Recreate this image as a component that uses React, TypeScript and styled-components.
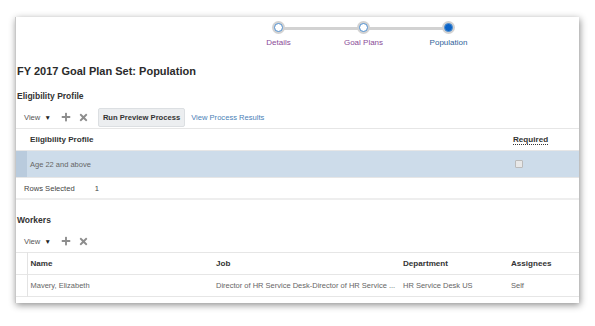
import styled, { createGlobalStyle } from 'styled-components';
import { FaPlus, FaTimes } from 'react-icons/fa';

const GlobalStyle = createGlobalStyle`
  html, body {
    margin: 0;
    padding: 0;
    background: #ffffff;
    font-family: 'Liberation Sans', Arial, sans-serif;
  }
`;

interface StepINTERFACE {
  label: string;
  current?: boolean;
}

const steps: StepINTERFACE[] = [{ label: 'Details' }, { label: 'Goal Plans' }, { label: 'Population', current: true }];

const workers = [
  {
    name: 'Mavery, Elizabeth',
    job: 'Director of HR Service Desk-Director of HR Service ...',
    department: 'HR Service Desk US',
    assignees: 'Self',
  },
];

function Toolbar({ children }: { children?: React.ReactNode }) {
  return (
    <S.ToolbarRow>
      <S.ViewMenu>
        View <S.Caret>▼</S.Caret>
      </S.ViewMenu>
      <S.IconBtn>
        <FaPlus size={10} />
      </S.IconBtn>
      <S.IconBtn>
        <FaTimes size={11} />
      </S.IconBtn>
      {children}
    </S.ToolbarRow>
  );
}

function App() {
  return (
    <>
      <GlobalStyle />
      <S.Page>
        <S.Card>
          <S.Train>
            {steps.map((step, i) => (
              <S.Step key={step.label} first={i === 0}>
                <S.Dot current={!!step.current} />
                <S.StepLabel current={!!step.current}>{step.label}</S.StepLabel>
              </S.Step>
            ))}
          </S.Train>

          <S.PageTitle>FY 2017 Goal Plan Set: Population</S.PageTitle>

          <S.SectionTitle>Eligibility Profile</S.SectionTitle>
          <Toolbar>
            <S.Button>Run Preview Process</S.Button>
            <S.Link>View Process Results</S.Link>
          </Toolbar>
          <S.Table>
            <colgroup>
              <S.Col w={11} />
              <S.Col />
              <S.Col w={69} />
            </colgroup>
            <thead>
              <tr>
                <S.Lead />
                <S.Th>Eligibility Profile</S.Th>
                <S.Th>
                  <S.Dotted>Required</S.Dotted>
                </S.Th>
              </tr>
            </thead>
            <tbody>
              <S.Row selected>
                <S.Lead selected />
                <S.Td>Age 22 and above</S.Td>
                <S.Td>
                  <S.Check />
                </S.Td>
              </S.Row>
            </tbody>
          </S.Table>
          <S.Footer>
            <span>Rows Selected</span>
            <span>1</span>
          </S.Footer>

          <S.SectionTitle spaced>Workers</S.SectionTitle>
          <Toolbar />
          <S.Table>
            <colgroup>
              <S.Col w={11} />
              <S.Col w={186} />
              <S.Col w={187} />
              <S.Col w={108} />
              <S.Col />
            </colgroup>
            <thead>
              <tr>
                <S.Lead bordered />
                <S.Th>Name</S.Th>
                <S.Th>Job</S.Th>
                <S.Th>Department</S.Th>
                <S.Th>Assignees</S.Th>
              </tr>
            </thead>
            <tbody>
              {workers.map((w) => (
                <S.Row key={w.name}>
                  <S.Lead bordered />
                  <S.Td>{w.name}</S.Td>
                  <S.Td>{w.job}</S.Td>
                  <S.Td>{w.department}</S.Td>
                  <S.Td>{w.assignees}</S.Td>
                </S.Row>
              ))}
            </tbody>
          </S.Table>
        </S.Card>
      </S.Page>
    </>
  );
}
export default App;

const Page = styled.div`
  width: 595px;
  height: 326px;
  padding: 17px 16px 0 15px;
  box-sizing: border-box;
  overflow: hidden;
`;

const Card = styled.div`
  width: 564px;
  height: 286px;
  background: #fff;
  border-left: 1px solid #c8c8c8;
  box-shadow: 1px 2px 7px rgba(0, 0, 0, 0.45);
  box-sizing: border-box;
  overflow: hidden;
`;

const Train = styled.div`
  display: flex;
  height: 46px;
  padding-left: 220px;
  padding-top: 5px;
  box-sizing: border-box;
`;

const Step = styled.div<{ first: boolean }>`
  position: relative;
  width: 85px;
  display: flex;
  flex-direction: column;
  align-items: center;

  &::before {
    content: '';
    display: ${({ first }) => (first ? 'none' : 'block')};
    position: absolute;
    top: 5px;
    left: -42px;
    width: 85px;
    height: 3px;
    background: #d2d2d2;
  }
`;

const Dot = styled.div<{ current: boolean }>`
  position: relative;
  z-index: 1;
  width: 7px;
  height: 7px;
  margin-top: 1px;
  border-radius: 50%;
  border: 1.5px solid #4f8fd0;
  background: ${({ current }) => (current ? '#0b64c8' : '#fff')};
  box-shadow: 0 0 0 2px #d2d2d2;
`;

const StepLabel = styled.div<{ current: boolean }>`
  margin-top: 6px;
  font-size: 8px;
  color: ${({ current }) => (current ? '#2f5f9a' : '#8b4c97')};
`;

const PageTitle = styled.div`
  font-size: 11px;
  font-weight: bold;
  color: #2b2b2b;
  line-height: 16px;
  padding-left: 1px;
`;

const SectionTitle = styled.div<{ spaced?: boolean }>`
  font-size: 8.5px;
  font-weight: bold;
  color: #333;
  line-height: 14px;
  padding-left: 1px;
  margin-top: ${({ spaced }) => (spaced ? '13px' : '10px')};
`;

const ToolbarRow = styled.div`
  display: flex;
  align-items: center;
  height: 22px;
  padding-left: 8px;
  margin-top: 3px;
  font-size: 7.6px;
`;

const ViewMenu = styled.span`
  color: #555;
  margin-right: 10px;
`;

const Caret = styled.span`
  font-size: 6.5px;
  color: #222;
  margin-left: 2px;
`;

const IconBtn = styled.span`
  display: inline-flex;
  color: #8d8d8d;
  margin-right: 7px;
`;

const Button = styled.span`
  margin-left: 2px;
  height: 19px;
  line-height: 17px;
  padding: 0 4px;
  background: #eceef0;
  border: 1px solid #dcdfe2;
  border-radius: 2px;
  font-weight: bold;
  color: #333;
  box-sizing: border-box;
`;

const Link = styled.span`
  margin-left: 6px;
  color: #4b7fb7;
`;

const Table = styled.table`
  width: 100%;
  border-collapse: collapse;
  table-layout: fixed;
  font-size: 7.5px;
  border-top: 1px solid #e6e6e6;
  border-bottom: 1px solid #e6e6e6;
`;

const Col = styled.col<{ w?: number }>`
  width: ${({ w }) => (w ? `${w}px` : 'auto')};
`;

const Lead = styled.td<{ selected?: boolean; bordered?: boolean }>`
  padding: 0;
  background: ${({ selected }) => (selected ? '#b9cbdd' : 'transparent')};
  border-right: ${({ bordered }) => (bordered ? '1px solid #e3e3e3' : 'none')};
`;

const Th = styled.th`
  height: 21px;
  padding: 0 3px;
  text-align: left;
  font-weight: bold;
  color: #333;
  font-size: 8.1px;
  white-space: nowrap;
`;

const Row = styled.tr<{ selected?: boolean }>`
  background: ${({ selected }) => (selected ? '#cddcea' : '#fff')};
  border-top: 1px solid #e6e6e6;
  & > td {
    height: ${({ selected }) => (selected ? '26px' : '21px')};
  }
`;

const Td = styled.td`
  padding: 0 0 0 3px;
  color: #666;
  white-space: nowrap;
  overflow: hidden;
`;

const Dotted = styled.span`
  border-bottom: 1px dotted #333;
`;

const Check = styled.span`
  display: inline-block;
  width: 6px;
  height: 6px;
  margin: 2px 0 0 2px;
  border: 1px solid #bbb;
  background: #e8e8e8;
  border-radius: 1px;
`;

const Footer = styled.div`
  display: flex;
  gap: 20px;
  height: 20px;
  align-items: center;
  padding-left: 8px;
  font-size: 7.6px;
  color: #444;
  border-bottom: 2px solid #eeeeee;
  margin-bottom: 1px;
`;

const S = {
  Page,
  Card,
  Train,
  Step,
  Dot,
  StepLabel,
  PageTitle,
  SectionTitle,
  ToolbarRow,
  ViewMenu,
  Caret,
  IconBtn,
  Button,
  Link,
  Table,
  Col,
  Lead,
  Th,
  Row,
  Td,
  Dotted,
  Check,
  Footer,
};
